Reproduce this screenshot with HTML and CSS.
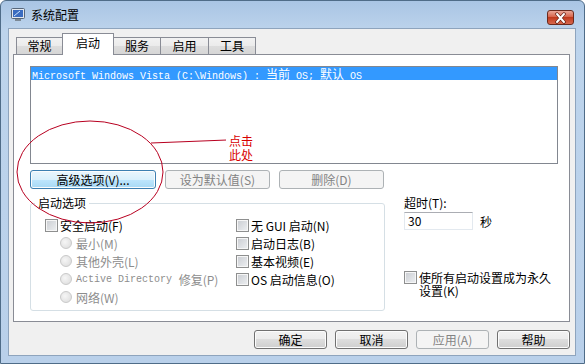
FILE: index.html
```html
<!DOCTYPE html>
<html lang="zh-CN">
<head>
  <meta charset="UTF-8" />
  <title>系统配置</title>
  <link rel="stylesheet" href="styles.css">
</head>
<body>

  <div class="window">
    <div class="titlebar">
      <svg class="app-icon" width="16" height="16" viewBox="0 0 16 16">
        <rect x="1.5" y="1.5" width="13" height="10" rx="1" fill="#e3e8ee" stroke="#56667a"/>
        <rect x="3" y="3" width="10" height="7" fill="#3a6cc0"/>
        <path d="M4 9 L10 4" stroke="#cfe6ff" stroke-width="1"/>
        <rect x="5" y="12" width="6" height="2" fill="#7c8995"/>
      </svg>
      <span class="title">系统配置</span>
      <div class="close-btn">
        <svg width="25" height="12" viewBox="0 0 25 12">
          <path d="M9 2 L16 10 M16 2 L9 10" stroke="#5a1a10" stroke-width="3.4" stroke-linecap="round"/>
          <path d="M9 2 L16 10 M16 2 L9 10" stroke="#fff" stroke-width="2" stroke-linecap="round"/>
        </svg>
      </div>
    </div>

    <div class="client">
      <div class="tabs">
        <div class="tab" style="width:47px">常规</div>
        <div class="tab active" style="width:52px">启动</div>
        <div class="tab" style="width:48px">服务</div>
        <div class="tab" style="width:49px">启用</div>
        <div class="tab" style="width:48px">工具</div>
      </div>

      <div class="panel">
        <div class="listbox">
          <div class="list-item selected"><span class="mono">Microsoft Windows Vista (C:\Windows) : </span>当前<span class="mono"> OS; </span>默认<span class="mono"> OS</span></div>
        </div>

        <div class="btn-row">
          <button class="btn btn-focus" style="width:126px">高级选项(V)...</button>
          <button class="btn" disabled style="width:105px">设为默认值(S)</button>
          <button class="btn" disabled style="width:105px">删除(D)</button>
        </div>

        <div class="options">
          <fieldset class="group">
            <legend>启动选项</legend>
            <div class="group-cols">
              <div class="col left-col">
                <div class="check"><span class="box"></span>安全启动(F)</div>
                <div class="radio"><span class="dot"></span>最小(M)</div>
                <div class="radio"><span class="dot"></span>其他外壳(L)</div>
                <div class="radio"><span class="dot"></span><span class="mono">Active Directory</span>&nbsp;修复(P)</div>
                <div class="radio"><span class="dot"></span>网络(W)</div>
              </div>
              <div class="col">
                <div class="check"><span class="box"></span>无 GUI 启动(N)</div>
                <div class="check"><span class="box"></span>启动日志(B)</div>
                <div class="check"><span class="box"></span>基本视频(E)</div>
                <div class="check"><span class="box"></span>OS 启动信息(O)</div>
              </div>
            </div>
          </fieldset>

          <div class="side">
            <div class="side-label">超时(T):</div>
            <div class="timeout">
              <span class="textbox">30</span>
              <span class="unit">秒</span>
            </div>
            <div class="check permanent">
              <span class="box"></span>
              <span class="wrap-text">使所有启动设置成为永久设置(K)</span>
            </div>
          </div>
        </div>
      </div>

      <div class="footer">
        <button class="btn">确定</button>
        <button class="btn">取消</button>
        <button class="btn" disabled>应用(A)</button>
        <button class="btn">帮助</button>
      </div>
    </div>

    <!-- red annotation drawn over the dialog -->
    <svg class="annot" width="585" height="364" viewBox="0 0 585 364">
      <ellipse cx="90" cy="172" rx="73" ry="51" fill="none" stroke="#b80020" stroke-width="1"/>
      <path d="M151 143 L227 140" fill="none" stroke="#b80020" stroke-width="1"/>
    </svg>
    <div class="annot-label">点击此处</div>
  </div>

</body>
</html>
```

FILE: styles.css
```css
* {
  box-sizing: border-box;
}

body {
  margin: 0;
  font-family: "Noto Sans CJK SC", "Liberation Sans", sans-serif;
  font-size: 12px;
  color: #000;
  background: #fff;
}

.mono {
  font-family: "Liberation Mono", monospace;
  font-size: 10px;
}

.window {
  position: relative;
  width: 585px;
  height: 364px;
  display: flex;
  flex-direction: column;
  background: linear-gradient(#a9c5e4, #bdd4ec 30px, #b9d0ea);
  border: 1px solid #4f6c88;
  border-radius: 6px 6px 0 0;
  overflow: hidden;
}

.titlebar {
  height: 27px;
  display: flex;
  align-items: center;
  padding-left: 9px;
}

.app-icon {
  flex: none;
}

.title {
  margin-left: 5px;
  line-height: 14px;
}

.close-btn {
  margin-left: auto;
  margin-right: 10px;
  align-self: flex-start;
  margin-top: 9px;
  width: 27px;
  height: 15px;
  border: 1px solid #6b2a1d;
  border-radius: 3px;
  background: linear-gradient(#eaa898, #d45d43 50%, #c03a1d 50%, #d8684e);
  display: flex;
  align-items: center;
  justify-content: center;
}

.client {
  flex: 1;
  margin: 0 8px 7px 7px;
  background: #f0f0f0;
  border: 1px solid #8ea4bd;
  padding: 4px 5px 0 4px;
}

/* tabs */
.tabs {
  position: relative;
  z-index: 1;
  height: 22px;
  margin-left: 3px;
  margin-bottom: -1px;
  display: flex;
  align-items: flex-end;
}

.tab {
  height: 17px;
  margin-bottom: 1px;
  margin-right: -1px;
  border: 1px solid #898c95;
  border-bottom: none;
  background: linear-gradient(#f2f2f2, #ebebeb 50%, #dddddd 50%, #d6d6d6);
  text-align: center;
  line-height: 16px;
}

.tab.active {
  position: relative;
  height: 22px;
  margin-bottom: 0;
  background: #fff;
  line-height: 16px;
  padding-top: 1px;
}

/* tab panel */
.panel {
  width: 557px;
  height: 268px;
  border: 1px solid #898c95;
  background: #fff;
  padding: 11px 0 0 16px;
}

.listbox {
  width: 528px;
  height: 98px;
  border: 1px solid #828790;
}

.list-item {
  height: 13px;
  line-height: 13px;
  padding-left: 1px;
  white-space: nowrap;
}

.list-item.selected {
  background: #3399ff;
  color: #fff;
}

.btn-row {
  display: flex;
  gap: 9px;
  margin-top: 6px;
}

.btn {
  height: 19px;
  padding: 0;
  border: 1px solid #707070;
  border-radius: 3px;
  background: linear-gradient(#f2f2f2, #ebebeb 50%, #dddddd 50%, #cfcfcf);
  box-shadow: inset 0 0 0 1px #fcfcfc;
  font-family: inherit;
  font-size: 12px;
  line-height: 15px;
  color: #000;
}

.btn-focus {
  border-color: #3c7fb1;
  background: linear-gradient(#eaf6fd, #d9f0fc 50%, #bee6fd 50%, #a7d9f5);
}

.btn:disabled {
  border-color: #adb2b5;
  background: #f4f4f4;
  box-shadow: none;
  color: #838383;
}

/* startup options */
.options {
  display: flex;
  margin-top: 7px;
}

.group {
  margin: 0;
  padding: 0;
  width: 355px;
  height: 115px;
  border: 1px solid #d5dfe5;
  border-radius: 3px;
}

.group legend {
  margin-left: 4px;
  padding: 0 3px;
  line-height: 14px;
}

.group-cols {
  display: flex;
  padding: 6px 0 0 14px;
}

.left-col {
  width: 191px;
}

.check,
.radio {
  height: 18px;
  display: flex;
  align-items: center;
  gap: 2px;
  white-space: nowrap;
}

.radio {
  padding-left: 15px;
  gap: 4px;
  color: #8d8d8d;
}

.box {
  flex: none;
  width: 13px;
  height: 13px;
  border: 1px solid #8e8f8f;
  background: linear-gradient(135deg, #c9ccd1, #eef0f2);
  box-shadow: inset 0 0 0 1px #f6f6f6;
}

.dot {
  flex: none;
  width: 12px;
  height: 12px;
  border: 1px solid #c9c9c9;
  border-radius: 50%;
  background: radial-gradient(circle at 40% 40%, #f6f6f6, #dadada);
}

.side {
  margin-left: 19px;
  width: 160px;
}

.side-label {
  line-height: 14px;
}

.timeout {
  display: flex;
  align-items: center;
  margin-top: 2px;
}

.textbox {
  width: 69px;
  height: 18px;
  border: 1px solid #e3e9ef;
  border-top-color: #abadb3;
  padding-left: 3px;
  line-height: 16px;
}

.unit {
  margin-left: 7px;
}

.permanent {
  height: auto;
  margin-top: 41px;
  align-items: flex-start;
  white-space: normal;
}

.wrap-text {
  width: 138px;
  line-height: 13px;
}

.footer {
  display: flex;
  justify-content: flex-end;
  gap: 8px;
  margin-top: 8px;
}

.footer .btn {
  width: 73px;
}

/* annotation overlay */
.annot {
  position: absolute;
  left: -1px;
  top: -1px;
  pointer-events: none;
}

.annot-label {
  position: absolute;
  left: 225px;
  top: 132px;
  width: 30px;
  padding: 1px 3px;
  background: #fff;
  color: #d80000;
  line-height: 14px;
}
```
